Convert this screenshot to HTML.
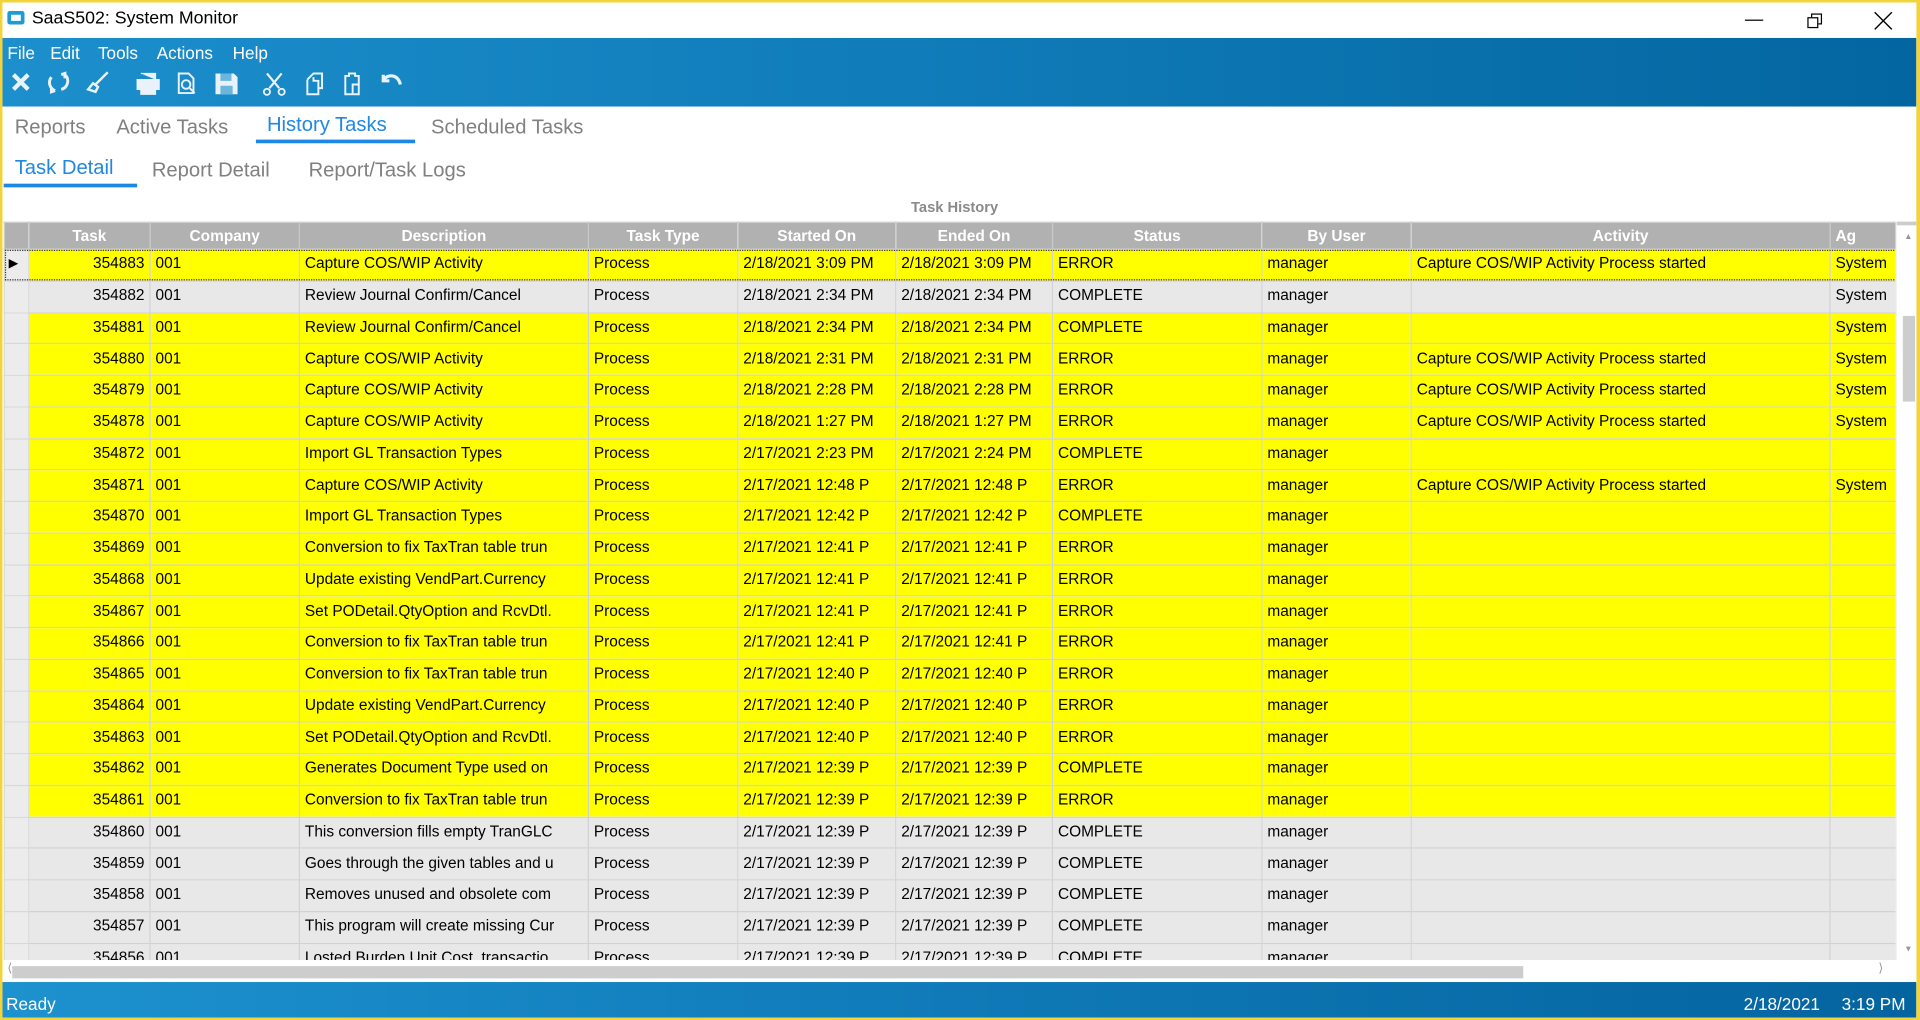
<!DOCTYPE html>
<html><head><meta charset="utf-8"><style>
*{margin:0;padding:0;box-sizing:border-box}
html,body{width:1920px;height:1020px;overflow:hidden;background:#f2d43a}
#w{position:absolute;left:0;top:0;width:1568px;height:833px;transform:scale(1.22449);transform-origin:0 0;font-family:"Liberation Sans",Arial,sans-serif;background:#fff;border:2px solid #f2d43a;border-right-width:3px;overflow:hidden}
.abs{position:absolute}
#title{left:0;top:0;width:100%;height:29px;background:#fff}
#blue{left:0;top:29px;width:100%;height:56px;background:linear-gradient(90deg,#1c8fcc,#0f7bb8 50%,#0466a0)}
.menu{color:#fff;font-size:14px;top:33px}
.tab{font-size:16.5px;color:#808080;top:93px}
.sub{font-size:16.5px;color:#808080;top:128px}
table{position:absolute;left:1px;top:179px;border-collapse:collapse;table-layout:fixed;font-size:12.6px;color:#000}
td,th{height:25.75px;border:1px solid #d2d2d2;white-space:nowrap;overflow:hidden;padding:0 4px;text-align:left;line-height:14px;vertical-align:middle}
td{padding-bottom:2px}
th{height:22px;background:#b1b1b1;color:#fff;font-weight:bold;text-align:center;border-color:#c8c8c8}
tr.y td{background:#ffff00}
tr.g td{background:#e8e8e8}
td.sel{background:#ececec!important;border-color:#d8d8d8}
td.n{text-align:right}
#status{left:0;top:800px;width:100%;height:33px;background:linear-gradient(90deg,#1d92cf,#0f7ab7 50%,#0464a0);color:#fff;font-size:14px}
</style></head><body><div id="w">
<div id="title" class="abs">
 <div class="abs" style="left:4px;top:7px;width:14px;height:11px;border:3px solid #1e9ad6;border-radius:2px;background:#fff"></div>
 <div class="abs" style="left:24px;top:5px;font-size:14.5px;color:#000">SaaS502: System Monitor</div>
 <div class="abs" style="left:1423px;top:14px;width:15px;height:1px;background:#000"></div>
 <div class="abs" style="left:1477px;top:9px;width:9px;height:9px;border:1px solid #000"></div>
 <div class="abs" style="left:1474px;top:12px;width:9px;height:9px;border:1px solid #000;background:#fff"></div>
 <svg class="abs" style="left:1528px;top:7px" width="16" height="16"><path d="M1 1L15 15M15 1L1 15" stroke="#000" stroke-width="1.1"/></svg>
</div>
<div id="blue" class="abs">
 <div class="abs menu" style="left:4px;top:4px">File</div>
 <div class="abs menu" style="left:39px;top:4px">Edit</div>
 <div class="abs menu" style="left:78px;top:4px">Tools</div>
 <div class="abs menu" style="left:126px;top:4px">Actions</div>
 <div class="abs menu" style="left:188px;top:4px">Help</div>
 <svg class="abs" style="left:0;top:26px" width="340" height="26" fill="none" stroke="#e8f2f8" stroke-width="2.4">
  <path d="M9 4L21 16M21 4L9 16" stroke-width="3.5"/>
  <path d="M40 6a7 7 0 0 0 3 11M51 4a7 7 0 0 1 -3 12M43 17l-3 1 0-4M48 4l3-1 0 4"/>
  <path d="M76 18l-6-2 4-5 4 3zM76 12l10-10" stroke-width="2"/>
  <path d="M110 8h18v8h-18zM113 3h12v5M113 14h12v6h-12z" fill="#e8f2f8" stroke-width="1"/>
  <path d="M144 3h8l4 4v12h-12z" stroke-width="1.6"/><circle cx="150" cy="12" r="3.5" stroke-width="1.6"/><path d="M153 15l4 4" stroke-width="1.6"/>
  <path d="M174 3h15l3 3v14h-18z" fill="#e8f2f8" stroke="none"/><path d="M178 3h9v6h-9zM178 13h10v7h-10z" fill="#6cb6de" stroke="none"/>
  <path d="M216 3l10 12M228 3l-10 12" stroke-width="1.8"/><circle cx="216" cy="18" r="2.5" stroke-width="1.5"/><circle cx="228" cy="18" r="2.5" stroke-width="1.5"/>
  <path d="M249 8l5-5h7v12h-3M249 8v12h9v-11h-4v-3" stroke-width="1.6"/>
  <path d="M280 5h3v-2h5v2h3v15h-11zM286 12h5v8h-5z" stroke-width="1.6"/>
  <path d="M311 8c5-5 12-4 14 4M311 4v5h5" stroke-width="2.6"/>
 </svg>
</div>
<div class="abs tab" style="left:10px">Reports</div>
<div class="abs tab" style="left:93px">Active Tasks</div>
<div class="abs tab" style="left:216px;top:91px;color:#2187e0">History Tasks</div>
<div class="abs" style="left:207px;top:112px;width:130px;height:3px;background:#1e88e5"></div>
<div class="abs tab" style="left:350px">Scheduled Tasks</div>
<div class="abs sub" style="left:10px;color:#2187e0;top:126px">Task Detail</div>
<div class="abs" style="left:1px;top:148px;width:109px;height:3px;background:#1e88e5"></div>
<div class="abs sub" style="left:122px">Report Detail</div>
<div class="abs sub" style="left:250px">Report/Task Logs</div>
<div class="abs" style="left:742px;top:160px;font-size:12px;font-weight:bold;color:#8a8a8a">Task History</div>
<table>
<colgroup><col style="width:20px"><col style="width:99px"><col style="width:122px"><col style="width:236px"><col style="width:122px"><col style="width:129px"><col style="width:128px"><col style="width:171px"><col style="width:122px"><col style="width:342px"><col style="width:60px"></colgroup>
<tr><th style="background:#b1b1b1"></th><th>Task</th><th>Company</th><th>Description</th><th>Task Type</th><th>Started On</th><th>Ended On</th><th>Status</th><th>By User</th><th>Activity</th><th style="text-align:left">Ag</th></tr>
<tr class="y" style="outline:1px dotted #333;outline-offset:-1px"><td class="sel" style="font-size:10px;padding:0 3px">&#9654;</td><td class="n">354883</td><td>001</td><td>Capture COS/WIP Activity</td><td>Process</td><td>2/18/2021 3:09 PM</td><td>2/18/2021 3:09 PM</td><td>ERROR</td><td>manager</td><td>Capture COS/WIP Activity Process started</td><td>System</td></tr>
<tr class="g"><td class="sel"></td><td class="n">354882</td><td>001</td><td>Review Journal Confirm/Cancel</td><td>Process</td><td>2/18/2021 2:34 PM</td><td>2/18/2021 2:34 PM</td><td>COMPLETE</td><td>manager</td><td></td><td>System</td></tr>
<tr class="y"><td class="sel"></td><td class="n">354881</td><td>001</td><td>Review Journal Confirm/Cancel</td><td>Process</td><td>2/18/2021 2:34 PM</td><td>2/18/2021 2:34 PM</td><td>COMPLETE</td><td>manager</td><td></td><td>System</td></tr>
<tr class="y"><td class="sel"></td><td class="n">354880</td><td>001</td><td>Capture COS/WIP Activity</td><td>Process</td><td>2/18/2021 2:31 PM</td><td>2/18/2021 2:31 PM</td><td>ERROR</td><td>manager</td><td>Capture COS/WIP Activity Process started</td><td>System</td></tr>
<tr class="y"><td class="sel"></td><td class="n">354879</td><td>001</td><td>Capture COS/WIP Activity</td><td>Process</td><td>2/18/2021 2:28 PM</td><td>2/18/2021 2:28 PM</td><td>ERROR</td><td>manager</td><td>Capture COS/WIP Activity Process started</td><td>System</td></tr>
<tr class="y"><td class="sel"></td><td class="n">354878</td><td>001</td><td>Capture COS/WIP Activity</td><td>Process</td><td>2/18/2021 1:27 PM</td><td>2/18/2021 1:27 PM</td><td>ERROR</td><td>manager</td><td>Capture COS/WIP Activity Process started</td><td>System</td></tr>
<tr class="y"><td class="sel"></td><td class="n">354872</td><td>001</td><td>Import GL Transaction Types</td><td>Process</td><td>2/17/2021 2:23 PM</td><td>2/17/2021 2:24 PM</td><td>COMPLETE</td><td>manager</td><td></td><td></td></tr>
<tr class="y"><td class="sel"></td><td class="n">354871</td><td>001</td><td>Capture COS/WIP Activity</td><td>Process</td><td>2/17/2021 12:48 P</td><td>2/17/2021 12:48 P</td><td>ERROR</td><td>manager</td><td>Capture COS/WIP Activity Process started</td><td>System</td></tr>
<tr class="y"><td class="sel"></td><td class="n">354870</td><td>001</td><td>Import GL Transaction Types</td><td>Process</td><td>2/17/2021 12:42 P</td><td>2/17/2021 12:42 P</td><td>COMPLETE</td><td>manager</td><td></td><td></td></tr>
<tr class="y"><td class="sel"></td><td class="n">354869</td><td>001</td><td>Conversion to fix TaxTran table trun</td><td>Process</td><td>2/17/2021 12:41 P</td><td>2/17/2021 12:41 P</td><td>ERROR</td><td>manager</td><td></td><td></td></tr>
<tr class="y"><td class="sel"></td><td class="n">354868</td><td>001</td><td>Update existing VendPart.Currency</td><td>Process</td><td>2/17/2021 12:41 P</td><td>2/17/2021 12:41 P</td><td>ERROR</td><td>manager</td><td></td><td></td></tr>
<tr class="y"><td class="sel"></td><td class="n">354867</td><td>001</td><td>Set PODetail.QtyOption and RcvDtl.</td><td>Process</td><td>2/17/2021 12:41 P</td><td>2/17/2021 12:41 P</td><td>ERROR</td><td>manager</td><td></td><td></td></tr>
<tr class="y"><td class="sel"></td><td class="n">354866</td><td>001</td><td>Conversion to fix TaxTran table trun</td><td>Process</td><td>2/17/2021 12:41 P</td><td>2/17/2021 12:41 P</td><td>ERROR</td><td>manager</td><td></td><td></td></tr>
<tr class="y"><td class="sel"></td><td class="n">354865</td><td>001</td><td>Conversion to fix TaxTran table trun</td><td>Process</td><td>2/17/2021 12:40 P</td><td>2/17/2021 12:40 P</td><td>ERROR</td><td>manager</td><td></td><td></td></tr>
<tr class="y"><td class="sel"></td><td class="n">354864</td><td>001</td><td>Update existing VendPart.Currency</td><td>Process</td><td>2/17/2021 12:40 P</td><td>2/17/2021 12:40 P</td><td>ERROR</td><td>manager</td><td></td><td></td></tr>
<tr class="y"><td class="sel"></td><td class="n">354863</td><td>001</td><td>Set PODetail.QtyOption and RcvDtl.</td><td>Process</td><td>2/17/2021 12:40 P</td><td>2/17/2021 12:40 P</td><td>ERROR</td><td>manager</td><td></td><td></td></tr>
<tr class="y"><td class="sel"></td><td class="n">354862</td><td>001</td><td>Generates Document Type used on</td><td>Process</td><td>2/17/2021 12:39 P</td><td>2/17/2021 12:39 P</td><td>COMPLETE</td><td>manager</td><td></td><td></td></tr>
<tr class="y"><td class="sel"></td><td class="n">354861</td><td>001</td><td>Conversion to fix TaxTran table trun</td><td>Process</td><td>2/17/2021 12:39 P</td><td>2/17/2021 12:39 P</td><td>ERROR</td><td>manager</td><td></td><td></td></tr>
<tr class="g"><td class="sel"></td><td class="n">354860</td><td>001</td><td>This conversion fills empty TranGLC</td><td>Process</td><td>2/17/2021 12:39 P</td><td>2/17/2021 12:39 P</td><td>COMPLETE</td><td>manager</td><td></td><td></td></tr>
<tr class="g"><td class="sel"></td><td class="n">354859</td><td>001</td><td>Goes through the given tables and u</td><td>Process</td><td>2/17/2021 12:39 P</td><td>2/17/2021 12:39 P</td><td>COMPLETE</td><td>manager</td><td></td><td></td></tr>
<tr class="g"><td class="sel"></td><td class="n">354858</td><td>001</td><td>Removes unused and obsolete com</td><td>Process</td><td>2/17/2021 12:39 P</td><td>2/17/2021 12:39 P</td><td>COMPLETE</td><td>manager</td><td></td><td></td></tr>
<tr class="g"><td class="sel"></td><td class="n">354857</td><td>001</td><td>This program will create missing Cur</td><td>Process</td><td>2/17/2021 12:39 P</td><td>2/17/2021 12:39 P</td><td>COMPLETE</td><td>manager</td><td></td><td></td></tr>
<tr class="g"><td class="sel"></td><td class="n">354856</td><td>001</td><td>Losted Burden Unit Cost, transactio</td><td>Process</td><td>2/17/2021 12:39 P</td><td>2/17/2021 12:39 P</td><td>COMPLETE</td><td>manager</td><td></td><td></td></tr>
</table>
<div class="abs" style="left:1546px;top:179px;width:20px;height:605px;background:#fff;border-left:1px solid #eee"></div>
<div class="abs" style="left:1547px;top:179px;width:19px;height:3px;background:#ccc"></div>
<div class="abs" style="left:1553px;top:188px;font-size:7px;color:#999">&#9650;</div>
<div class="abs" style="left:1552px;top:256px;width:10px;height:70px;background:#cdcdcd"></div>
<div class="abs" style="left:1553px;top:770px;font-size:7px;color:#999">&#9660;</div>
<div class="abs" style="left:0;top:782px;width:1566px;height:18px;background:#fff"></div>
<div class="abs" style="left:4px;top:784px;font-size:10px;color:#999">&#10216;</div>
<div class="abs" style="left:8px;top:787px;width:1234px;height:10px;background:#cdcdcd"></div>
<div class="abs" style="left:1532px;top:784px;font-size:10px;color:#999">&#10217;</div>
<div id="status" class="abs">
 <div class="abs" style="left:3px;top:10px">Ready</div>
 <div class="abs" style="left:1422px;top:10px">2/18/2021</div>
 <div class="abs" style="left:1502px;top:10px">3:19 PM</div>
</div>
</div></body></html>
